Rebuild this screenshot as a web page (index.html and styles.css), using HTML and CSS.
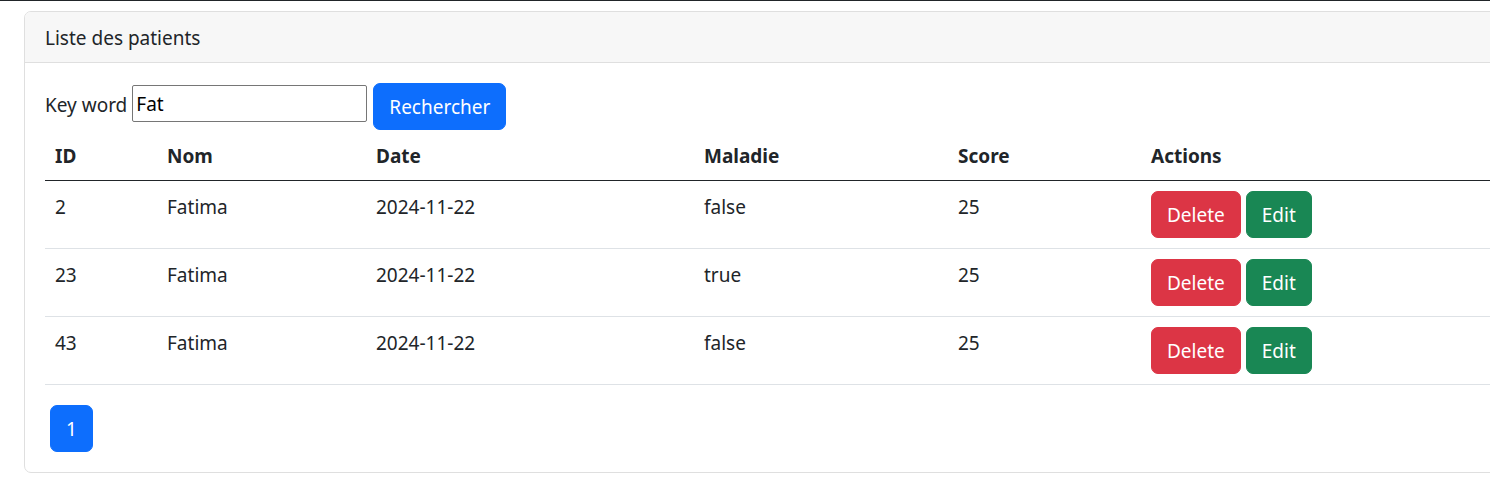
FILE: index.html
```html
<!DOCTYPE html>
<html lang="fr">
<head>
<meta charset="utf-8">
<title>Liste des patients</title>
<link rel="stylesheet" href="styles.css">
</head>
<body>
<div class="topbar"></div>
<main class="page">
  <div class="card">
    <div class="card-header">Liste des patients</div>
    <div class="card-body">
      <form class="search">
        <label class="search-label" for="kw">Key word</label>
        <input id="kw" class="search-input" type="text" value="Fat">
        <button type="button" class="btn btn-primary">Rechercher</button>
      </form>
      <table class="table">
        <colgroup>
          <col class="c-id"><col class="c-nom"><col class="c-date"><col class="c-mal"><col class="c-score"><col>
        </colgroup>
        <thead>
          <tr><th>ID</th><th>Nom</th><th>Date</th><th>Maladie</th><th>Score</th><th>Actions</th></tr>
        </thead>
        <tbody>
          <tr><td>2</td><td>Fatima</td><td>2024-11-22</td><td>false</td><td>25</td>
            <td><div class="actions"><button type="button" class="btn btn-danger">Delete</button><button type="button" class="btn btn-success">Edit</button></div></td></tr>
          <tr><td>23</td><td>Fatima</td><td>2024-11-22</td><td>true</td><td>25</td>
            <td><div class="actions"><button type="button" class="btn btn-danger">Delete</button><button type="button" class="btn btn-success">Edit</button></div></td></tr>
          <tr><td>43</td><td>Fatima</td><td>2024-11-22</td><td>false</td><td>25</td>
            <td><div class="actions"><button type="button" class="btn btn-danger">Delete</button><button type="button" class="btn btn-success">Edit</button></div></td></tr>
        </tbody>
      </table>
      <ul class="pages">
        <li><a class="btn btn-primary page-btn" href="#">1</a></li>
      </ul>
    </div>
  </div>
</main>
</body>
</html>
```
FILE: styles.css
```css
html {
  overflow: hidden;
}
body {
  margin: 0;
  font-family: "Noto Sans", "Open Sans", sans-serif;
  font-size: 19px;
  line-height: 30px;
  color: #212529;
  background: #fff;
}
.topbar {
  height: 1px;
  background: #212529;
}
.page {
  padding: 10px 0 0 24px;
}
.card {
  width: 1520px;
  border: 1px solid #dfdfdf;
  border-radius: 7px;
  background: #fff;
}
.card-header {
  padding: 11px 20px 9px;
  background: #f7f7f7;
  border-bottom: 1px solid #dfdfdf;
  border-radius: 6px 6px 0 0;
}
.card-body {
  padding: 20px;
}
.search {
  display: flex;
  align-items: flex-start;
  margin: 0;
}
.search-label {
  margin: 7px 5px 0 0;
}
.search-input {
  box-sizing: border-box;
  width: 235px;
  height: 37px;
  margin: 2px 6px 0 0;
  padding: 0 3px;
  border: 1px solid #767676;
  border-radius: 2px;
  font: inherit;
  color: #000;
}
.btn {
  display: inline-block;
  box-sizing: border-box;
  padding: 8px 15px 7px;
  border: 1px solid transparent;
  border-radius: 7px;
  font: inherit;
  line-height: 30px;
  color: #fff;
  text-decoration: none;
  cursor: pointer;
}
.btn-primary { background: #0d6efd; border-color: #0d6efd; }
.btn-danger { background: #dc3545; border-color: #dc3545; }
.btn-success { background: #198754; border-color: #198754; }
.table {
  width: 100%;
  border-collapse: collapse;
  table-layout: fixed;
  margin-bottom: 20px;
}
.c-id { width: 112px; }
.c-nom { width: 209px; }
.c-date { width: 328px; }
.c-mal { width: 254px; }
.c-score { width: 193px; }
.table th,
.table td {
  padding: 11px 10px 9px;
  text-align: left;
  vertical-align: top;
  border-bottom: 1px solid #dee2e6;
}
.table th {
  font-weight: 700;
  border-bottom-color: #212529;
}
.table td:last-child {
  padding-top: 10px;
  padding-bottom: 10px;
}
.actions {
  display: flex;
  gap: 5px;
}
.pages {
  list-style: none;
  margin: 0;
  padding: 0 0 0 5px;
  display: flex;
}
```
